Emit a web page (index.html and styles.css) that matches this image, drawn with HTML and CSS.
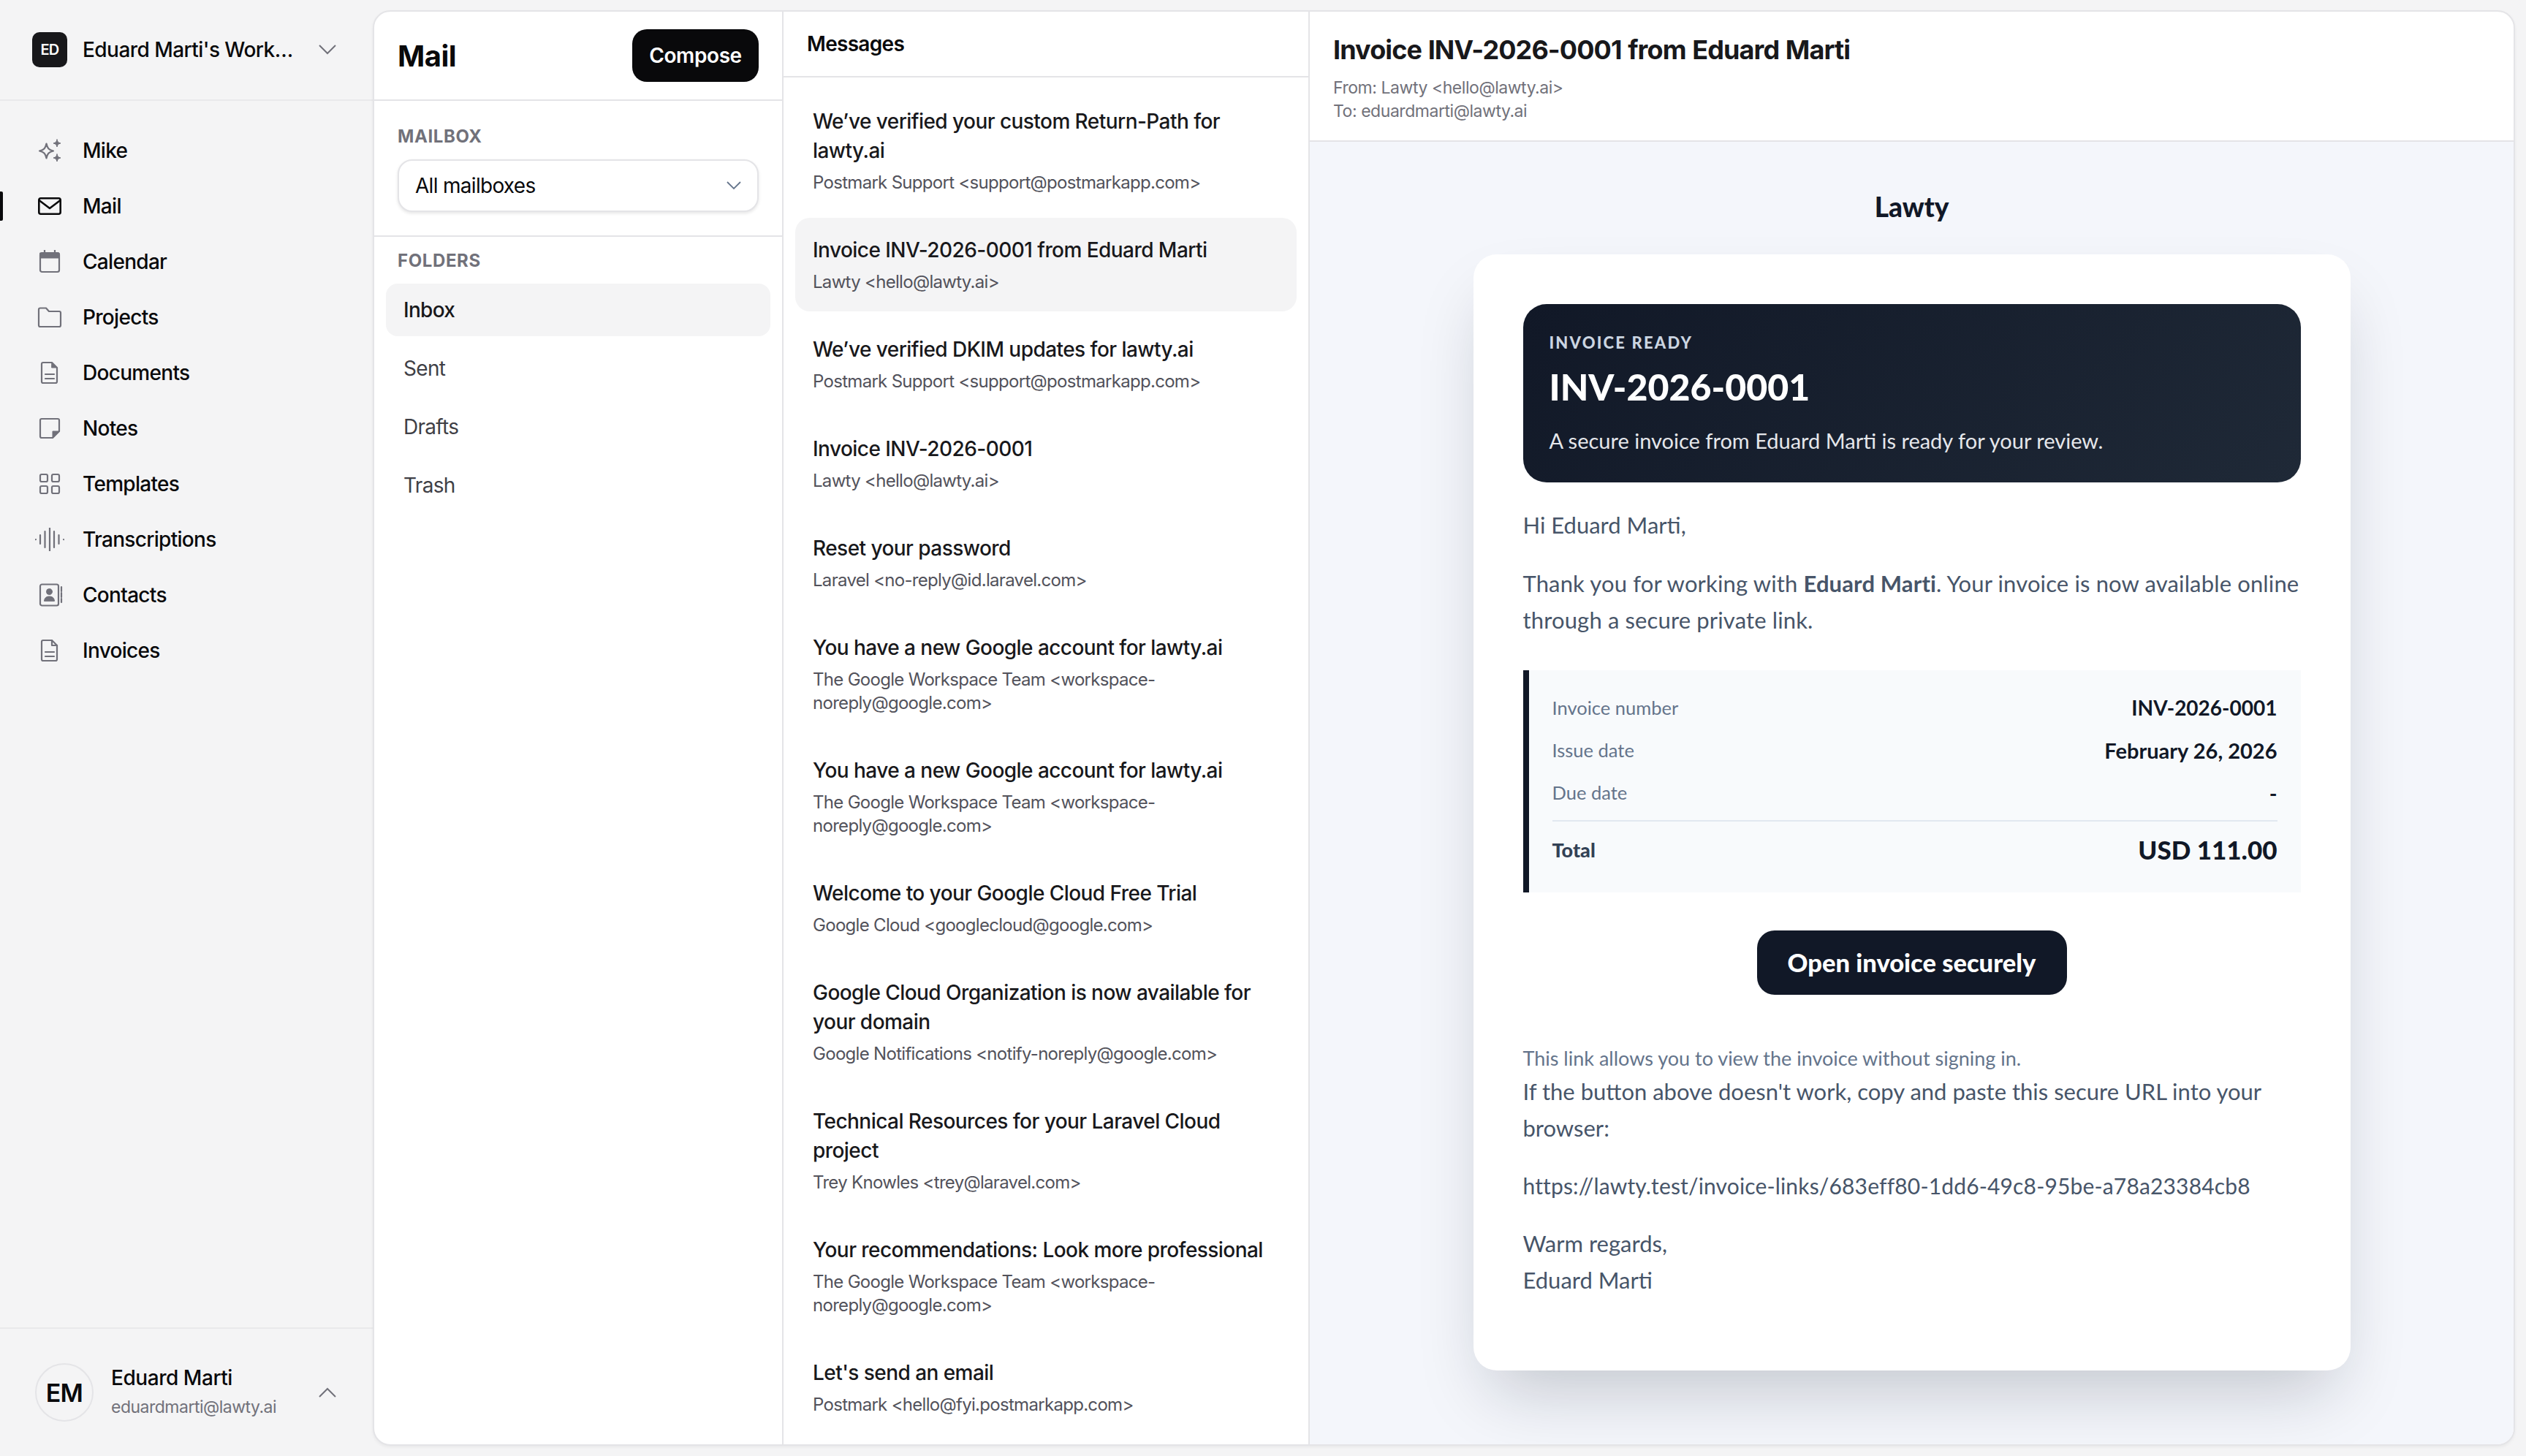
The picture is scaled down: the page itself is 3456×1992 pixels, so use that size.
FILE: index.html
```html
<!DOCTYPE html>
<html lang="en">
<head>
    <meta charset="UTF-8">
    <meta name="viewport" content="width=device-width, initial-scale=1.0">
    <title>Mail</title>
    <link rel="stylesheet" href="styles.css">
</head>
<body>
    <aside class="sidebar">
        <div class="workspace">
            <span class="workspace-logo">ED</span>
            <span class="workspace-name">Eduard Marti's Workspace</span>
            <svg class="chevron" viewBox="0 0 24 14"><path d="M1 1l11 11L23 1"/></svg>
        </div>
        <nav class="nav">
            <a class="nav-item"><svg class="nav-icon" viewBox="0 0 40 32"><path class="line" d="M15.500 6.500c1.300 6 3 8.700 9.500 10-6.500 1.300-8.200 4-9.500 10-1.300-6-3-8.700-9.500-10 6.500-1.300 8.200-4 9.500-10z"/><path class="solid" d="M30 1c.7 3.200 1.800 4.300 5 5-3.200.7-4.300 1.800-5 5-.7-3.200-1.800-4.300-5-5 3.200-.7 4.300-1.800 5-5zM30 21c.7 3.200 1.800 4.300 5 5-3.200.7-4.300 1.800-5 5-.7-3.200-1.800-4.300-5-5 3.200-.7 4.300-1.800 5-5z"/></svg>Mike</a>
            <a class="nav-item active"><svg class="nav-icon" viewBox="0 0 40 32"><rect x="5.300" y="5.300" width="29.400" height="21.400" rx="2.500"/><path d="M5.500 8L20 19 34.500 8"/></svg>Mail</a>
            <a class="nav-item"><svg class="nav-icon" viewBox="0 0 40 32"><rect x="7" y="4" width="26" height="26" rx="2.500"/><path class="solid" d="M7 4h26v7H7z"/><path d="M13 0v4M27 0v4"/></svg>Calendar</a>
            <a class="nav-item"><svg class="nav-icon" viewBox="0 0 40 32"><path d="M5 5.500A2 2 0 0 1 7 3.500h8l4 4.500h14a2 2 0 0 1 2 2v17a2 2 0 0 1-2 2H7a2 2 0 0 1-2-2z"/></svg>Projects</a>
            <a class="nav-item"><svg class="nav-icon" viewBox="0 0 40 32"><path d="M11 2h12l7 7v19a2 2 0 0 1-2 2H11a2 2 0 0 1-2-2V4a2 2 0 0 1 2-2z"/><path class="solid" d="M23 2l7 7h-7z"/><path d="M14 18h12M14 24h12"/></svg>Documents</a>
            <a class="nav-item"><svg class="nav-icon" viewBox="0 0 40 32"><path d="M9 3h22a2 2 0 0 1 2 2v15l-9 9H9a2 2 0 0 1-2-2V5a2 2 0 0 1 2-2z"/><path class="solid" d="M33 20h-9v9z"/></svg>Notes</a>
            <a class="nav-item"><svg class="nav-icon" viewBox="0 0 40 32"><rect x="7" y="3" width="10" height="10" rx="2"/><rect x="23" y="3" width="10" height="10" rx="2"/><rect x="7" y="19" width="10" height="10" rx="2"/><rect x="23" y="19" width="10" height="10" rx="2"/></svg>Templates</a>
            <a class="nav-item"><svg class="nav-icon" viewBox="0 0 40 32"><path d="M1 16v.1M7 10v12M13.500 5v22M20 0v32M26 5v22M32.500 10v12M39 16v.1"/></svg>Transcriptions</a>
            <a class="nav-item"><svg class="nav-icon" viewBox="0 0 40 32"><rect x="7" y="1.500" width="25" height="29" rx="2.500"/><circle class="solid" cx="19.500" cy="11.500" r="4"/><path class="solid" d="M12.500 24c.5-4.500 3.500-6 7-6s6.500 1.500 7 6z"/><path d="M36 5v6M36 13v6M36 21v5"/></svg>Contacts</a>
            <a class="nav-item"><svg class="nav-icon" viewBox="0 0 40 32"><path d="M11 2h12l7 7v19a2 2 0 0 1-2 2H11a2 2 0 0 1-2-2V4a2 2 0 0 1 2-2z"/><path d="M23 2v7h7"/><path d="M14 18h12M14 24h12"/></svg>Invoices</a>
        </nav>
        <div class="account">
            <span class="account-avatar">EM</span>
            <div class="account-text">
                <div class="account-name">Eduard Marti</div>
                <div class="account-email">eduardmarti@lawty.ai</div>
            </div>
            <svg class="chevron" viewBox="0 0 24 14"><path d="M1 13L12 2l11 11"/></svg>
        </div>
    </aside>

    <main class="panel">
        <section class="mail-col">
            <div class="mail-head">
                <h1>Mail</h1>
                <button class="btn-compose">Compose</button>
            </div>
            <div class="mailbox">
                <div class="col-label">MAILBOX</div>
                <div class="select">
                    All mailboxes
                    <svg viewBox="0 0 20 12"><path d="M1 1l9 9 9-9"/></svg>
                </div>
            </div>
            <div class="folders">
                <div class="col-label">FOLDERS</div>
                <a class="folder active">Inbox</a>
                <a class="folder">Sent</a>
                <a class="folder">Drafts</a>
                <a class="folder">Trash</a>
            </div>
        </section>

        <section class="messages-col">
            <div class="messages-head">Messages</div>
            <div class="messages">
                <a class="message"><div class="message-title">We’ve verified your custom Return-Path for lawty.ai</div><div class="message-from">Postmark Support &lt;support@postmarkapp.com&gt;</div></a>
                <a class="message active"><div class="message-title">Invoice INV-2026-0001 from Eduard Marti</div><div class="message-from">Lawty &lt;hello@lawty.ai&gt;</div></a>
                <a class="message"><div class="message-title">We’ve verified DKIM updates for lawty.ai</div><div class="message-from">Postmark Support &lt;support@postmarkapp.com&gt;</div></a>
                <a class="message"><div class="message-title">Invoice INV-2026-0001</div><div class="message-from">Lawty &lt;hello@lawty.ai&gt;</div></a>
                <a class="message"><div class="message-title">Reset your password</div><div class="message-from">Laravel &lt;no-reply@id.laravel.com&gt;</div></a>
                <a class="message"><div class="message-title">You have a new Google account for lawty.ai</div><div class="message-from">The Google Workspace Team &lt;workspace-noreply@google.com&gt;</div></a>
                <a class="message"><div class="message-title">You have a new Google account for lawty.ai</div><div class="message-from">The Google Workspace Team &lt;workspace-noreply@google.com&gt;</div></a>
                <a class="message"><div class="message-title">Welcome to your Google Cloud Free Trial</div><div class="message-from">Google Cloud &lt;googlecloud@google.com&gt;</div></a>
                <a class="message"><div class="message-title">Google Cloud Organization is now available for your domain</div><div class="message-from">Google Notifications &lt;notify-noreply@google.com&gt;</div></a>
                <a class="message"><div class="message-title">Technical Resources for your Laravel Cloud project</div><div class="message-from">Trey Knowles &lt;trey@laravel.com&gt;</div></a>
                <a class="message"><div class="message-title">Your recommendations: Look more professional</div><div class="message-from">The Google Workspace Team &lt;workspace-noreply@google.com&gt;</div></a>
                <a class="message"><div class="message-title">Let's send an email</div><div class="message-from">Postmark &lt;hello@fyi.postmarkapp.com&gt;</div></a>
            </div>
        </section>

        <section class="detail">
            <div class="detail-head">
                <h2>Invoice INV-2026-0001 from Eduard Marti</h2>
                <div class="detail-meta">From: Lawty &lt;hello@lawty.ai&gt;</div>
                <div class="detail-meta">To: eduardmarti@lawty.ai</div>
            </div>
            <div class="detail-body">
                <div class="brand">Lawty</div>
                <div class="email-card">
                    <div class="hero">
                        <div class="hero-label">INVOICE READY</div>
                        <div class="hero-number">INV-2026-0001</div>
                        <div class="hero-text">A secure invoice from Eduard Marti is ready for your review.</div>
                    </div>
                    <p class="greeting">Hi Eduard Marti,</p>
                    <p class="para">Thank you for working with <strong>Eduard Marti</strong>. Your invoice is now available online through a secure private link.</p>
                    <div class="summary">
                        <div class="summary-row"><span>Invoice number</span><b class="code">INV-2026-0001</b></div>
                        <div class="summary-row"><span>Issue date</span><b>February 26, 2026</b></div>
                        <div class="summary-row"><span>Due date</span><b>-</b></div>
                        <div class="summary-total"><span>Total</span><b>USD 111.00</b></div>
                    </div>
                    <div class="cta"><a class="btn-open">Open invoice securely</a></div>
                    <p class="note">This link allows you to view the invoice without signing in.</p>
                    <p class="fallback">If the button above doesn't work, copy and paste this secure URL into your browser:</p>
                    <p class="para link">https://lawty.test/invoice-links/683eff80-1dd6-49c8-95be-a78a23384cb8</p>
                    <p class="para signoff">Warm regards,<br>Eduard Marti</p>
                </div>
            </div>
        </section>
    </main>
</body>
</html>
```

FILE: styles.css
```css
* { box-sizing: border-box; }
html, body { margin: 0; height: 100%; }
body { display: flex; height: 1992px; overflow: hidden; background: #f4f4f5; color: #09090b; font-family: Inter, "Liberation Sans", sans-serif; font-size: 28px; letter-spacing: -0.025em; }
h1, h2, p { margin: 0; }

/* sidebar */
.sidebar { width: 510px; flex: none; display: flex; flex-direction: column; }
.workspace { height: 138px; flex: none; display: flex; align-items: center; padding: 0 50px 0 44px; border-bottom: 2px solid #e9e9eb; }
.workspace-logo { width: 48px; height: 48px; flex: none; display: flex; align-items: center; justify-content: center; background: #18181b; border-radius: 10px; color: #fff; font-size: 20px; font-weight: 600; }
.workspace-name { width: 292px; margin-left: 21px; font-weight: 500; letter-spacing: -0.55px; white-space: nowrap; overflow: hidden; text-overflow: ellipsis; }
.chevron { width: 24px; height: 14px; flex: none; margin-left: auto; fill: none; stroke: #71717a; stroke-width: 2; }

.nav { flex: 1; padding-top: 30px; }
.nav-item { position: relative; height: 76px; display: flex; align-items: center; padding-left: 48px; font-weight: 500; }
.nav-item.active::before { content: ""; position: absolute; left: 0; top: 18px; width: 4px; height: 40px; background: #09090b; border-radius: 0 2px 2px 0; }
.nav-icon { width: 40px; height: 32px; flex: none; margin-right: 25px; fill: none; stroke: #71717a; stroke-width: 2.200; stroke-linecap: round; stroke-linejoin: round; }
.nav-icon .solid { fill: #71717a; stroke-width: 1; }
.nav-item.active .nav-icon { stroke: #09090b; stroke-width: 2.600; }

.account { height: 176px; flex: none; display: flex; align-items: center; padding: 0 50px 0 48px; border-top: 2px solid #e9e9eb; }
.account-avatar { width: 80px; height: 80px; flex: none; display: flex; align-items: center; justify-content: center; border: 2px solid #e4e4e7; border-radius: 50%; font-size: 34px; font-weight: 600; }
.account-text { margin-left: 24px; }
.account-name { font-weight: 500; line-height: 40px; letter-spacing: -0.45px; }
.account-email { color: #71717a; font-size: 23px; line-height: 40px; letter-spacing: -0.5px; }

/* main panel */
.panel { flex: 1; display: flex; margin: 14px 15px 14px 0; background: #fff; border: 2px solid #e4e4e7; border-radius: 24px; overflow: hidden; box-shadow: 0 2px 4px rgba(0,0,0,0.05); }

.mail-col { width: 560px; flex: none; border-right: 2px solid #e4e4e7; }
.mail-head { height: 122px; display: flex; align-items: center; justify-content: space-between; padding: 0 32px; border-bottom: 2px solid #e4e4e7; }
.mail-head h1 { font-size: 40px; font-weight: 700; letter-spacing: -0.5px; }
.btn-compose { height: 72px; width: 173px; padding: 0; border: none; border-radius: 20px; background: #09090b; color: #fff; font: 600 28px Inter, sans-serif; letter-spacing: -0.4px; }
.mailbox { padding: 32px; border-bottom: 2px solid #e4e4e7; }
.col-label { padding-top: 2px; color: #71717a; font-size: 24px; font-weight: 700; line-height: 30px; letter-spacing: 0.6px; margin-bottom: 16px; }
.select { height: 72px; display: flex; align-items: center; justify-content: space-between; padding: 0 22px; background: #fff; border: 2px solid #e4e4e7; border-radius: 20px; box-shadow: 0 2px 4px rgba(0,0,0,0.1); }
.select svg { width: 20px; height: 12px; fill: none; stroke: #64748b; stroke-width: 1.800; }
.folders { padding: 16px 16px 0; }
.folders .col-label { margin-left: 16px; }
.folder { height: 72px; display: flex; align-items: center; margin-bottom: 8px; padding: 0 24px; border-radius: 16px; color: #3f3f46; }
.folder.active { background: #f4f4f5; color: #18181b; font-weight: 500; }

.messages-col { width: 720px; flex: none; border-right: 2px solid #e4e4e7; }
.messages-head { height: 90px; padding-left: 32px; border-bottom: 2px solid #e4e4e7; font-weight: 600; line-height: 88px; }
.messages { padding: 16px; }
.message { display: block; margin-bottom: 8px; padding: 24px; border-radius: 20px; }
.message.active { background: #f4f4f5; }
.message-title { font-weight: 500; line-height: 40px; color: #18181b; letter-spacing: -0.55px; }
.message-from { margin-top: 8px; color: #52525b; font-size: 24px; line-height: 32px; }

.detail { flex: 1; display: flex; flex-direction: column; min-width: 0; }
.detail-head { height: 178px; flex: none; padding: 24px 32px; border-bottom: 2px solid #e4e4e7; }
.detail-head h2 { font-size: 36px; font-weight: 700; line-height: 56px; margin-bottom: 8px; color: #18181b; letter-spacing: -0.9px; word-spacing: 1px; }
.detail-meta { color: #71717a; font-size: 23px; line-height: 32px; letter-spacing: -0.45px; }

/* email preview */
.detail-body { flex: 1; padding-top: 64px; background: #f4f6fb; font-family: Lato, sans-serif; color: #475569; font-size: 31px; letter-spacing: 0; }
.brand { margin-bottom: 40px; color: #111827; font-size: 37px; font-weight: 900; line-height: 50px; text-align: center; }
.email-card { width: 1200px; height: 1527px; margin: 0 auto; padding: 68px; background: #fff; border-radius: 32px; box-shadow: 0 48px 96px -24px rgba(15,23,42,0.22); }
.hero { height: 244px; padding: 37px 36px 0; border-radius: 32px; background: linear-gradient(135deg, #111827, #1f2937); color: #fff; }
.hero-label { color: #cbd5e1; font-size: 22px; font-weight: 900; line-height: 32px; letter-spacing: 2.200px; }
.hero-number { margin-top: 10px; font-size: 50px; font-weight: 900; line-height: 68px; }
.hero-text { margin-top: 15px; color: #e5e7eb; font-size: 29px; line-height: 50px; }
.greeting { margin-top: 33px; line-height: 50px; }
.para { margin-top: 30px; line-height: 50px; letter-spacing: 0.14px; }
.para strong { font-weight: 700; }
.summary { margin-top: 44px; padding: 31px 32px 0; height: 304px; background: #f8fafc; border-left: 8px solid #111827; }
.summary-row { display: flex; justify-content: space-between; align-items: center; height: 40px; margin-bottom: 18px; color: #64748b; font-size: 25.500px; }
.summary-row b { color: #111827; font-size: 29px; font-weight: 700; }
.summary-row b.code { font-size: 28px; }
.summary-total { display: flex; justify-content: space-between; align-items: center; height: 62px; padding-top: 16px; border-top: 2px solid #e2e8f0; color: #334155; font-size: 27px; font-weight: 900; }
.summary-total b { color: #111827; font-size: 35px; font-weight: 900; }
.cta { margin-top: 52px; display: flex; justify-content: center; }
.btn-open { width: 424px; height: 88px; padding-bottom: 2px; display: flex; align-items: center; justify-content: center; background: #111827; border-radius: 24px; color: #fff; font-size: 34.500px; font-weight: 900; }
.note { margin-top: 69px; color: #64748b; font-size: 27px; line-height: 36px; }
.fallback { margin-top: 2px; line-height: 50px; }
.para.link { margin-top: 29px; font-size: 30px; letter-spacing: 0.15px; }
.para.signoff { margin-top: 29px; letter-spacing: 0; }
```
